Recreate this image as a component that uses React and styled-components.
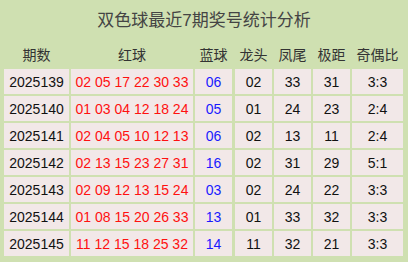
import React from "react";
import styled, { createGlobalStyle } from "styled-components";

const rows = [
  ["2025139", "02 05 17 22 30 33", "06", "02", "33", "31", "3:3"],
  ["2025140", "01 03 04 12 18 24", "05", "01", "24", "23", "2:4"],
  ["2025141", "02 04 05 10 12 13", "06", "02", "13", "11", "2:4"],
  ["2025142", "02 13 15 23 27 31", "16", "02", "31", "29", "5:1"],
  ["2025143", "02 09 12 13 15 24", "03", "02", "24", "22", "3:3"],
  ["2025144", "01 08 15 20 26 33", "13", "01", "33", "32", "3:3"],
  ["2025145", "11 12 15 18 25 32", "14", "11", "32", "21", "3:3"],
];

const heads = ["期数", "红球", "蓝球", "龙头", "凤尾", "极距", "奇偶比"];

const GlobalStyle = createGlobalStyle`
  html, body {
    margin: 0;
    padding: 0;
    background: #cfe0b1;
  }
`;

const Page = styled.div`
  width: 408px;
  height: 262px;
  background: #cfe0b1;
  font-family: "Liberation Sans", "Noto Sans CJK SC", sans-serif;
  padding: 0 4px;
  box-sizing: border-box;
`;

const Title = styled.div`
  height: 40px;
  line-height: 41px;
  text-align: center;
  font-size: 17px;
  color: #444;
`;

const Grid = styled.div`
  display: grid;
  grid-template-columns: 65px 122px 37px 38px 37px 37px 51px;
  grid-template-rows: 27px repeat(7, 25px);
  column-gap: 2px;
  row-gap: 2px;
`;

const Head = styled.div`
  display: flex;
  align-items: center;
  justify-content: center;
  font-size: 14px;
  color: #333;
  margin-left: ${(p) => (p.$split ? "1px" : "0")};
`;

const Cell = styled.div`
  display: flex;
  align-items: center;
  justify-content: center;
  background: #f2e8e8;
  font-size: 14px;
  color: ${(p) => p.$color || "#111"};
  margin-left: ${(p) => (p.$split ? "1px" : "0")};
  white-space: pre;
`;

const colColor = [null, "#ff1010", "#1a1aff", null, null, null, null];

export default function App() {
  return (
    <Page>
      <GlobalStyle />
      <Title>双色球最近7期奖号统计分析</Title>
      <Grid>
        {heads.map((h, i) => (
          <Head key={h} $split={i === 3}>
            {h}
          </Head>
        ))}
        {rows.map((r) =>
          r.map((v, i) => (
            <Cell key={r[0] + i} $color={colColor[i]} $split={i === 3}>
              {v}
            </Cell>
          ))
        )}
      </Grid>
    </Page>
  );
}
